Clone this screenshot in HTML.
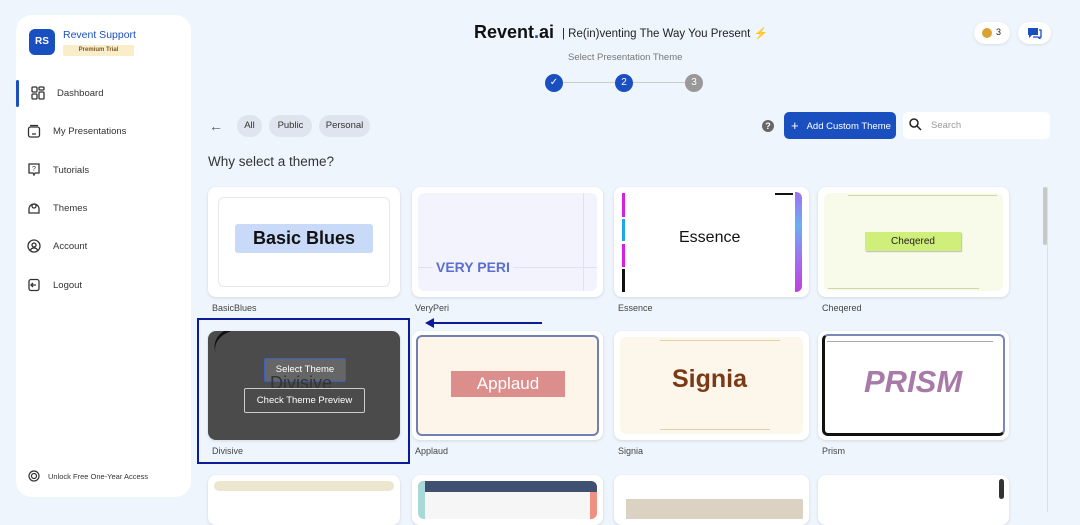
<!DOCTYPE html>
<html><head><meta charset="utf-8"><style>
*{margin:0;padding:0;box-sizing:border-box}
body{width:1080px;height:512px;overflow:hidden;background:#eff5fd;font-family:"Liberation Sans",sans-serif;position:relative;color:#222}
.abs{position:absolute}
.side{left:16px;top:15px;width:175px;height:482px;background:#fff;border-radius:16px}
.nav{position:absolute;left:53px;font-size:9.5px;color:#333}
.ic{position:absolute;left:27px;width:14px;height:14px}
.card{position:absolute;background:#fff;border-radius:8px;box-shadow:0 1px 3px rgba(0,0,0,.12);overflow:hidden}
.inner{position:absolute;left:6px;top:6px;right:6px;bottom:6px;border-radius:6px;overflow:hidden}
.lbl{position:absolute;font-size:9px;color:#444}
.pill{position:absolute;top:115px;height:22px;border-radius:11px;background:#dfe4ee;font-size:9.5px;color:#333;line-height:22px;text-align:center;display:flex;align-items:center;justify-content:center}
.step{position:absolute;top:74px;width:18px;height:18px;border-radius:50%;color:#fff;font-size:10px;line-height:18px;text-align:center}
</style></head><body>
<div class="abs side"></div>
<div class="abs" style="left:29px;top:29px;width:26px;height:26px;background:#1a4fc0;border-radius:6px;color:#fff;font-size:10px;font-weight:bold;line-height:26px;text-align:center">RS</div>
<div class="abs" style="left:63px;top:29px;font-size:10.5px;color:#1a4fc0">Revent Support</div>
<div class="abs" style="left:63px;top:45px;width:71px;height:11px;background:#faedc9;border-radius:2px;font-size:6px;color:#7a5a2a;text-align:center;line-height:11px;font-weight:bold">Premium Trial</div>
<div class="abs" style="left:16px;top:80px;width:3px;height:27px;background:#1a4fc0;border-radius:2px"></div>
<svg class="ic" style="top:86px;left:31px" viewBox="0 0 14 14" fill="none" stroke="#333" stroke-width="1.3"><rect x="1" y="1" width="5" height="5" rx="1"/><rect x="8" y="1" width="5" height="3" rx="1"/><rect x="1" y="8" width="5" height="5" rx="1"/><rect x="8" y="6" width="5" height="7" rx="1"/></svg>
<div class="nav" style="top:88px;left:57px">Dashboard</div>
<svg class="ic" style="top:124px" viewBox="0 0 14 14" fill="none" stroke="#333" stroke-width="1.3"><rect x="1.5" y="3" width="11" height="10" rx="2"/><path d="M3 1.5h8M5 10h4"/></svg>
<div class="nav" style="top:126px">My Presentations</div>
<svg class="ic" style="top:162px" viewBox="0 0 14 14" fill="none" stroke="#333" stroke-width="1.3"><path d="M2 2h10v9H8l-1 2-1-2H2z"/><text x="7" y="9" font-size="7" text-anchor="middle" fill="#333" stroke="none">?</text></svg>
<div class="nav" style="top:165px">Tutorials</div>
<svg class="ic" style="top:201px" viewBox="0 0 14 14" fill="none" stroke="#333" stroke-width="1.3"><path d="M2 8a5 5 0 0 1 10 0v4H2z"/><circle cx="7" cy="5" r="2"/></svg>
<div class="nav" style="top:203px">Themes</div>
<svg class="ic" style="top:239px" viewBox="0 0 14 14" fill="none" stroke="#333" stroke-width="1.3"><circle cx="7" cy="7" r="6"/><circle cx="7" cy="6" r="2"/><path d="M3.5 11a4 4 0 0 1 7 0"/></svg>
<div class="nav" style="top:241px">Account</div>
<svg class="ic" style="top:278px" viewBox="0 0 14 14" fill="none" stroke="#333" stroke-width="1.3"><rect x="2" y="1.5" width="10" height="11" rx="2"/><path d="M9 7H4M6 5 4 7l2 2"/></svg>
<div class="nav" style="top:280px">Logout</div>
<svg class="abs" style="left:28px;top:470px" width="12" height="12" viewBox="0 0 12 12" fill="none" stroke="#333" stroke-width="1.2"><circle cx="6" cy="6" r="5"/><circle cx="6" cy="6" r="2.5"/></svg>
<div class="abs" style="left:48px;top:472px;font-size:7.5px;color:#333">Unlock Free One-Year Access</div>

<div class="abs" style="left:474px;top:22px;font-size:18px;font-weight:bold;color:#111">Revent<span style="color:#1a4fc0">.</span>ai</div>
<div class="abs" style="left:562px;top:26px;font-size:11.5px;color:#222">| Re(in)venting The Way You Present <span style="color:#1a4fc0">⚡</span></div>
<div class="abs" style="left:974px;top:22px;width:36px;height:22px;background:#fff;border-radius:11px;box-shadow:0 1px 3px rgba(0,0,0,.1)"><div class="abs" style="left:8px;top:6px;width:10px;height:10px;border-radius:50%;background:#d9a233"></div><div class="abs" style="left:22px;top:5px;font-size:9px">3</div></div>
<div class="abs" style="left:1018px;top:22px;width:33px;height:22px;background:#fff;border-radius:11px;box-shadow:0 1px 3px rgba(0,0,0,.1)"><svg class="abs" style="left:9px;top:5px" width="15" height="12" viewBox="0 0 15 12"><path d="M1 1h10v7H5l-3 3V8H1z" fill="#1a4fc0"/><path d="M12 3h2v7h-1v2l-2-2H6" fill="none" stroke="#1a4fc0" stroke-width="1.3"/></svg></div>
<div class="abs" style="left:568px;top:52px;font-size:9.5px;color:#777">Select Presentation Theme</div>
<div class="abs" style="left:563px;top:82px;width:52px;height:1px;background:#ccc"></div>
<div class="abs" style="left:633px;top:82px;width:52px;height:1px;background:#ccc"></div>
<div class="step" style="left:545px;background:#1a4fc0">✓</div>
<div class="step" style="left:615px;background:#1a4fc0">2</div>
<div class="step" style="left:685px;background:#999">3</div>

<div class="abs" style="left:209px;top:118px;font-size:14px;color:#555">←</div>
<div class="pill" style="left:237px;width:25px">All</div>
<div class="pill" style="left:269px;width:43px">Public</div>
<div class="pill" style="left:319px;width:51px">Personal</div>
<div class="abs" style="left:762px;top:120px;width:12px;height:12px;border-radius:50%;background:#666;color:#fff;font-size:9px;font-weight:bold;text-align:center;line-height:12px">?</div>
<div class="abs" style="left:784px;top:112px;width:112px;height:27px;background:#1a4fc0;border-radius:5px;color:#fff;font-size:9.5px;line-height:27px"><span style="margin-left:7px;font-size:13px;vertical-align:-1px">+</span><span style="margin-left:8px">Add Custom Theme</span></div>
<div class="abs" style="left:903px;top:112px;width:147px;height:27px;background:#fff;border-radius:5px"><div class="abs" style="left:28px;top:8px;font-size:9.5px;color:#999">Search</div></div>
<svg class="abs" style="left:908px;top:117px" width="14" height="14" viewBox="0 0 14 14" fill="none" stroke="#222" stroke-width="1.5"><circle cx="6" cy="6" r="4"/><path d="M9 9l4 4"/></svg>
<div class="abs" style="left:208px;top:154px;font-size:13.5px;color:#333">Why select a theme?</div>

<!-- row1 -->
<div class="card" style="left:208px;top:187px;width:192px;height:110px"><div class="inner" style="left:10px;top:10px;right:10px;bottom:10px;border:1px solid #e6e8ef"></div><div class="abs" style="left:27px;top:37px;width:138px;height:29px;background:#c8daf8;border-radius:3px;font-size:18px;font-weight:bold;color:#111;text-align:center;line-height:29px">Basic Blues</div></div>
<div class="lbl" style="left:212px;top:303px">BasicBlues</div>
<div class="card" style="left:412px;top:187px;width:191px;height:110px"><div class="inner" style="background:#f3f3fd"><div class="abs" style="left:0;right:0;top:74px;height:1px;background:#dfe0f5"></div><div class="abs" style="left:165px;top:0;bottom:0;width:1px;background:#dfe0f5"></div></div><div class="abs" style="left:21px;top:72px;font-size:14px;font-weight:bold;color:#5a6fd0;background:#f3f3fd;padding:0 3px">VERY PERI</div></div>
<div class="lbl" style="left:415px;top:303px">VeryPeri</div>
<div class="card" style="left:614px;top:187px;width:195px;height:110px"><div class="abs" style="left:8px;top:6px;width:3px;height:24px;background:#d61fe0"></div><div class="abs" style="left:8px;top:32px;width:3px;height:22px;background:#1ea8e8"></div><div class="abs" style="left:8px;top:57px;width:3px;height:23px;background:#d61fe0"></div><div class="abs" style="left:8px;top:82px;width:3px;height:23px;background:#111"></div><div class="abs" style="left:161px;top:6px;width:18px;height:2px;background:#111"></div><div class="abs" style="left:181px;top:5px;width:7px;height:100px;background:linear-gradient(#a070f0,#6ab0f0,#a070f0,#c040e0);border-radius:0 6px 6px 0"></div><div class="abs" style="left:65px;top:42px;font-size:16px;color:#111">Essence</div></div>
<div class="lbl" style="left:618px;top:303px">Essence</div>
<div class="card" style="left:818px;top:187px;width:191px;height:110px"><div class="inner" style="background:#f8fbea"><div class="abs" style="left:24px;top:2px;right:6px;height:1px;background:#cdd8a8"></div><div class="abs" style="left:4px;bottom:2px;right:24px;height:1px;background:#cdd8a8"></div></div><div class="abs" style="left:47px;top:45px;width:96px;height:19px;background:#cfee7a;box-shadow:1px 1px 1px #bbb;font-size:10px;text-align:center;line-height:19px;color:#222">Cheqered</div></div>
<div class="lbl" style="left:822px;top:303px">Cheqered</div>

<!-- row2 -->
<div class="card" style="left:208px;top:331px;width:192px;height:109px;background:#4b4b4b"><div class="abs" style="left:56px;top:27px;width:82px;height:24px;background:#666;border:1px solid #3a5fc0;border-radius:2px;color:#fff;font-size:9.5px;text-align:center;line-height:22px">Select Theme</div><div class="abs" style="left:62px;top:42px;font-size:18px;color:#333">Divisive</div><div class="abs" style="left:36px;top:57px;width:121px;height:25px;border:1px solid #ccc;border-radius:2px;color:#fff;font-size:9.5px;text-align:center;line-height:23px">Check Theme Preview</div><div class="abs" style="left:3px;top:0;width:30px;height:18px;border-top:3px solid #111;border-radius:30px 0 0 0;transform:rotate(-25deg)"></div></div>
<div class="lbl" style="left:212px;top:446px">Divisive</div>
<div class="abs" style="left:197px;top:318px;width:213px;height:146px;border:2px solid #0c1b96"></div>
<div class="abs" style="left:432px;top:322px;width:110px;height:2px;background:#0c1b96"></div>
<div class="abs" style="left:425px;top:318px;width:0;height:0;border-top:5px solid transparent;border-bottom:5px solid transparent;border-right:9px solid #0c1b96"></div>
<div class="card" style="left:412px;top:331px;width:191px;height:109px"><div class="inner" style="left:4px;top:4px;right:4px;bottom:4px;background:#fdf5ea;border:2px solid #7080b0"></div><div class="abs" style="left:39px;top:40px;width:114px;height:26px;background:#db8e8c;color:#fff;font-size:17px;text-align:center;line-height:26px">Applaud</div></div>
<div class="lbl" style="left:415px;top:446px">Applaud</div>
<div class="card" style="left:614px;top:331px;width:195px;height:109px"><div class="inner" style="background:#fdf6ea"><div class="abs" style="left:40px;top:3px;width:120px;height:1px;background:#e5cfa6"></div><div class="abs" style="left:40px;bottom:4px;width:110px;height:1px;background:#e5cfa6"></div></div><div class="abs" style="left:58px;top:34px;font-size:25px;font-weight:bold;color:#7b3a16">Signia</div></div>
<div class="lbl" style="left:618px;top:446px">Signia</div>
<div class="card" style="left:818px;top:331px;width:191px;height:109px"><div class="abs" style="left:4px;top:3px;right:4px;bottom:4px;border:2px solid #7a88b8;border-left:3px solid #111;border-bottom:3px solid #111;border-radius:6px"></div><div class="abs" style="left:9px;top:10px;right:16px;height:1px;background:#aaa"></div><div class="abs" style="left:46px;top:33px;font-size:31px;font-weight:bold;font-style:italic;color:#a87aa8">PRISM</div></div>
<div class="lbl" style="left:822px;top:446px">Prism</div>

<!-- row3 -->
<div class="card" style="left:208px;top:475px;width:192px;height:50px"><div class="inner" style="height:10px;background:#ede6cf"></div></div>
<div class="card" style="left:412px;top:475px;width:191px;height:50px"><div class="inner" style="background:#f6f6f6"><div class="abs" style="left:0;top:0;right:0;height:11px;background:#405070"></div><div class="abs" style="left:0;top:0;width:7px;bottom:0;background:#a8d8d8"></div><div class="abs" style="right:0;top:11px;width:7px;bottom:0;background:#f09080"></div></div></div>
<div class="card" style="left:614px;top:475px;width:195px;height:50px"><div class="abs" style="left:12px;right:6px;top:24px;height:20px;background:#dcd2c4"></div></div>
<div class="card" style="left:818px;top:475px;width:191px;height:50px"><div class="abs" style="left:181px;top:4px;width:5px;height:20px;background:#333;border-radius:3px"></div></div>

<div class="abs" style="left:1043px;top:187px;width:4px;height:58px;background:#c8c8c8;border-radius:2px"></div>
<div class="abs" style="left:1047px;top:187px;width:1px;height:325px;background:#e0e0e0"></div>
</body></html>
